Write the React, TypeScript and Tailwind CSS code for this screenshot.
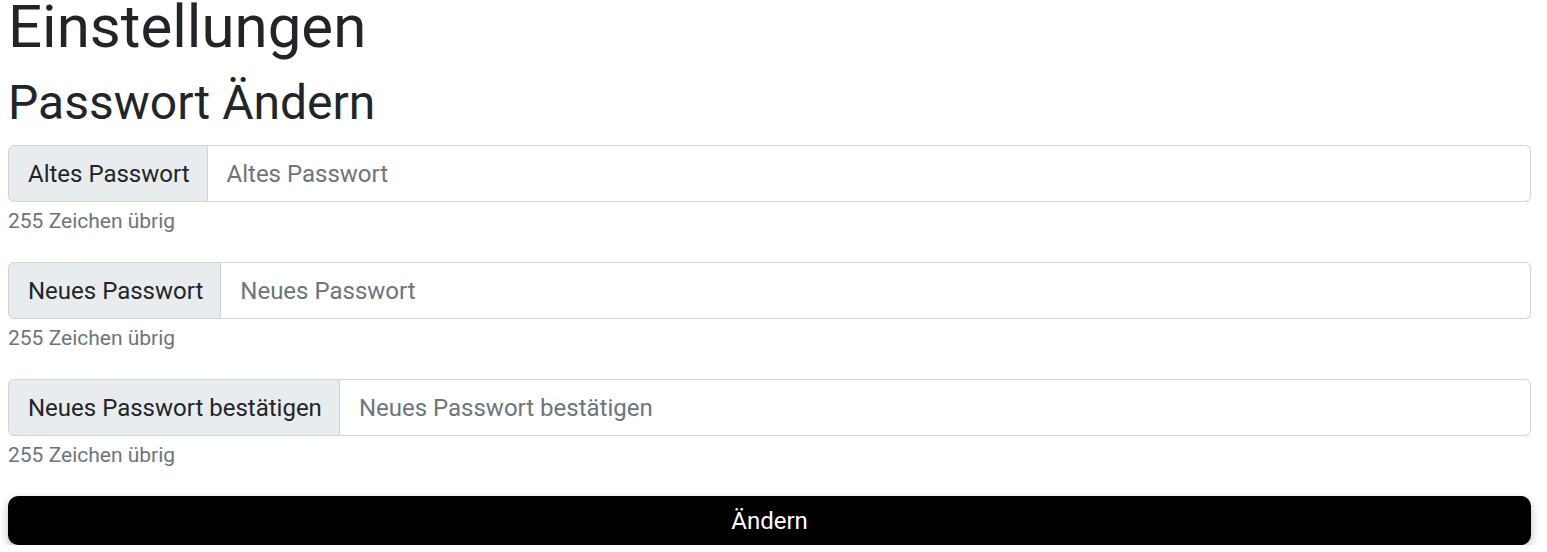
import { useState } from "react";

const fields = [
  { label: "Altes Passwort" },
  { label: "Neues Passwort" },
  { label: "Neues Passwort bestätigen" },
];

function Field({ label }: { label: string }) {
  const [value, setValue] = useState("");
  return (
    <div className="mb-[29px]">
      <div className="flex h-[57px] w-full">
        <span className="flex items-center pl-[19px] pr-[17px] bg-[#e9ecef] border border-[#ced4da] rounded-l-md text-[24px] text-[#212529] whitespace-nowrap">
          {label}
        </span>
        <input
          type="password"
          value={value}
          onChange={(e) => setValue(e.target.value)}
          placeholder={label}
          className="flex-1 min-w-0 px-[19px] border border-l-0 border-[#ced4da] rounded-r-md text-[24px] text-[#212529] placeholder:text-[#6c757d] outline-none"
        />
      </div>
      <div className="mt-[7px] text-[21px] leading-[24px] text-[#6c757d]">
        {255 - value.length} Zeichen übrig
      </div>
    </div>
  );
}

export default function App() {
  return (
    <div className="pl-2 pr-4 font-['Roboto',sans-serif] text-[#212529] bg-white">
      <h1 className="text-[60px] leading-[54px] font-normal">Einstellungen</h1>
      <h2 className="mt-[21px] mb-[14px] text-[48px] leading-[56px] font-normal">Passwort Ändern</h2>
      {fields.map((f) => (
        <Field key={f.label} label={f.label} />
      ))}
      <button className="w-full h-[49px] bg-black text-white text-[24px] rounded-[10px] shadow-[0_4px_10px_rgba(0,0,0,0.25)]">
        Ändern
      </button>
    </div>
  );
}
